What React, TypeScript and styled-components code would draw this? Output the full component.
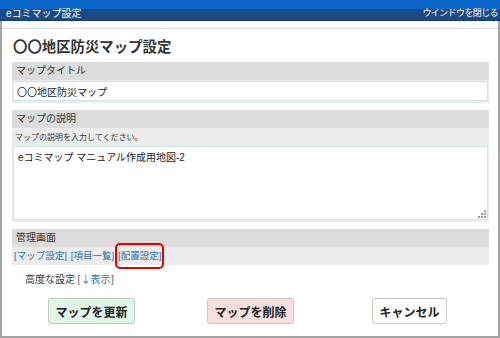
import React from 'react';
import styled, {createGlobalStyle} from 'styled-components';

const GlobalStyle = createGlobalStyle`
  html, body {
    margin: 0;
    padding: 0;
    background: #fff;
  }
  body {
    font-family: "Liberation Sans", "Noto Sans CJK JP", sans-serif;
    color: #333;
  }
`;

const Window = styled.div`
  width: 500px;
  height: 338px;
  box-sizing: border-box;
  display: flex;
  flex-direction: column;
  overflow: hidden;
`;

const TitleBar = styled.div`
  height: 21px;
  flex: none;
  display: flex;
  align-items: center;
  justify-content: space-between;
  padding: 3px 2px 0 6px;
  box-sizing: border-box;
  background: linear-gradient(#0a67c9 0, #0a67c9 9px, #1b4a88 9px, #1b4a88 20px, #15396b 20px);
  color: #fff;
`;

const TitleText = styled.span`
  font-size: 10px;
`;

const CloseLink = styled.span`
  font-size: 9px;
  letter-spacing: -0.6px;
`;

const Frame = styled.div`
  flex: 1;
  border: 2px solid #a3a3a3;
  border-top: none;
  padding-top: 7px;
  display: flex;
  flex-direction: column;
`;

const Panel = styled.div`
  flex: 1;
  border-top: 1px solid #dcdcdc;
  padding: 0 9px 0 10px;
`;

const Heading = styled.h1`
  margin: 9px 0 5px 1px;
  height: 19px;
  line-height: 19px;
  font-size: 14.4px;
  font-weight: bold;
  color: #333;
`;

const Section = styled.div`
  margin-bottom: 7px;
`;

const SectionHeader = styled.div`
  height: 18px;
  line-height: 18px;
  padding-left: 4px;
  background: #dcdcdc;
  font-size: 10px;
  color: #333;
`;

const FieldBody = styled.div`
  background: #ececec;
  padding: 1px 1px 2px 1px;
`;

const TextInput = styled.input`
  display: block;
  width: 100%;
  box-sizing: border-box;
  height: 20px;
  border: 1px solid #cfe4e4;
  padding: 0 3px;
  font-family: "Liberation Sans", "Noto Sans CJK JP", sans-serif;
  font-size: 10px;
  color: #222;
  outline: none;
`;

const Hint = styled.div`
  height: 17px;
  line-height: 17px;
  padding-left: 2px;
  font-size: 8px;
  color: #333;
`;

const AreaWrap = styled.div`
  position: relative;
`;

const TextArea = styled.textarea`
  display: block;
  width: 100%;
  height: 74px;
  box-sizing: border-box;
  border: 1px solid #cfe4e4;
  padding: 2px 4px;
  resize: none;
  font-family: "Liberation Sans", "Noto Sans CJK JP", sans-serif;
  font-size: 10px;
  color: #222;
  outline: none;
`;

const Grip = styled.svg`
  position: absolute;
  right: 2px;
  bottom: 2px;
`;

const LinkRow = styled.div`
  height: 18px;
  line-height: 18px;
  padding-left: 2px;
  background: #ececec;
  font-size: 9.5px;
  display: flex;
  gap: 4px;
`;

const Link = styled.a<{$marked?: boolean}>`
  position: relative;
  color: #2f6fae;
  text-decoration: none;
  &::after {
    content: '';
    display: ${p => (p.$marked ? 'block' : 'none')};
    position: absolute;
    left: -3px;
    right: -3px;
    top: -4px;
    bottom: -4px;
    border: 2px solid #e50000;
    border-radius: 5px;
  }
`;

const Advanced = styled.div`
  margin: 5px 0 0 13px;
  font-family: "Noto Sans CJK JP", sans-serif;
  font-size: 10px;
  line-height: 14px;
  color: #333;
`;

const ButtonRow = styled.div`
  display: grid;
  grid-template-columns: repeat(3, 1fr);
  justify-items: center;
  margin-top: 12px;
`;

const Button = styled.button<{$tone: 'green' | 'red' | 'plain'}>`
  height: 26px;
  padding: 0 6px;
  border: 1px solid #c8c8c8;
  border-radius: 3px;
  font-family: "Liberation Sans", "Noto Sans CJK JP", sans-serif;
  font-size: 12px;
  font-weight: bold;
  color: #222;
  background: ${p => (p.$tone === 'green' ? '#dff5e8' : p.$tone === 'red' ? '#f7dfdf' : '#fff')};
`;

export default function App() {
  return (
    <Window>
      <GlobalStyle/>
      <TitleBar>
        <TitleText>eコミマップ設定</TitleText>
        <CloseLink>ウインドウを閉じる</CloseLink>
      </TitleBar>
      <Frame>
        <Panel>
          <Heading>〇〇地区防災マップ設定</Heading>

          <Section>
            <SectionHeader>マップタイトル</SectionHeader>
            <FieldBody>
              <TextInput defaultValue="〇〇地区防災マップ"/>
            </FieldBody>
          </Section>

          <Section>
            <SectionHeader>マップの説明</SectionHeader>
            <FieldBody>
              <Hint>マップの説明を入力してください。</Hint>
              <AreaWrap>
                <TextArea defaultValue="eコミマップ マニュアル作成用地図-2"/>
                <Grip width="8" height="8" viewBox="0 0 8 8">
                  <g fill="#9a9a9a">
                    <rect x="6" y="0" width="2" height="2"/>
                    <rect x="3" y="3" width="2" height="2"/>
                    <rect x="6" y="3" width="2" height="2"/>
                    <rect x="0" y="6" width="2" height="2"/>
                    <rect x="3" y="6" width="2" height="2"/>
                    <rect x="6" y="6" width="2" height="2"/>
                  </g>
                </Grip>
              </AreaWrap>
            </FieldBody>
          </Section>

          <Section>
            <SectionHeader>管理画面</SectionHeader>
            <LinkRow>
              <Link>[マップ設定]</Link>
              <Link>[項目一覧]</Link>
              <Link $marked>[配置設定]</Link>
            </LinkRow>
          </Section>

          <Advanced>
            高度な設定 [<Link>↓表示</Link>]
          </Advanced>

          <ButtonRow>
            <Button $tone="green">マップを更新</Button>
            <Button $tone="red">マップを削除</Button>
            <Button $tone="plain">キャンセル</Button>
          </ButtonRow>
        </Panel>
      </Frame>
    </Window>
  );
}
